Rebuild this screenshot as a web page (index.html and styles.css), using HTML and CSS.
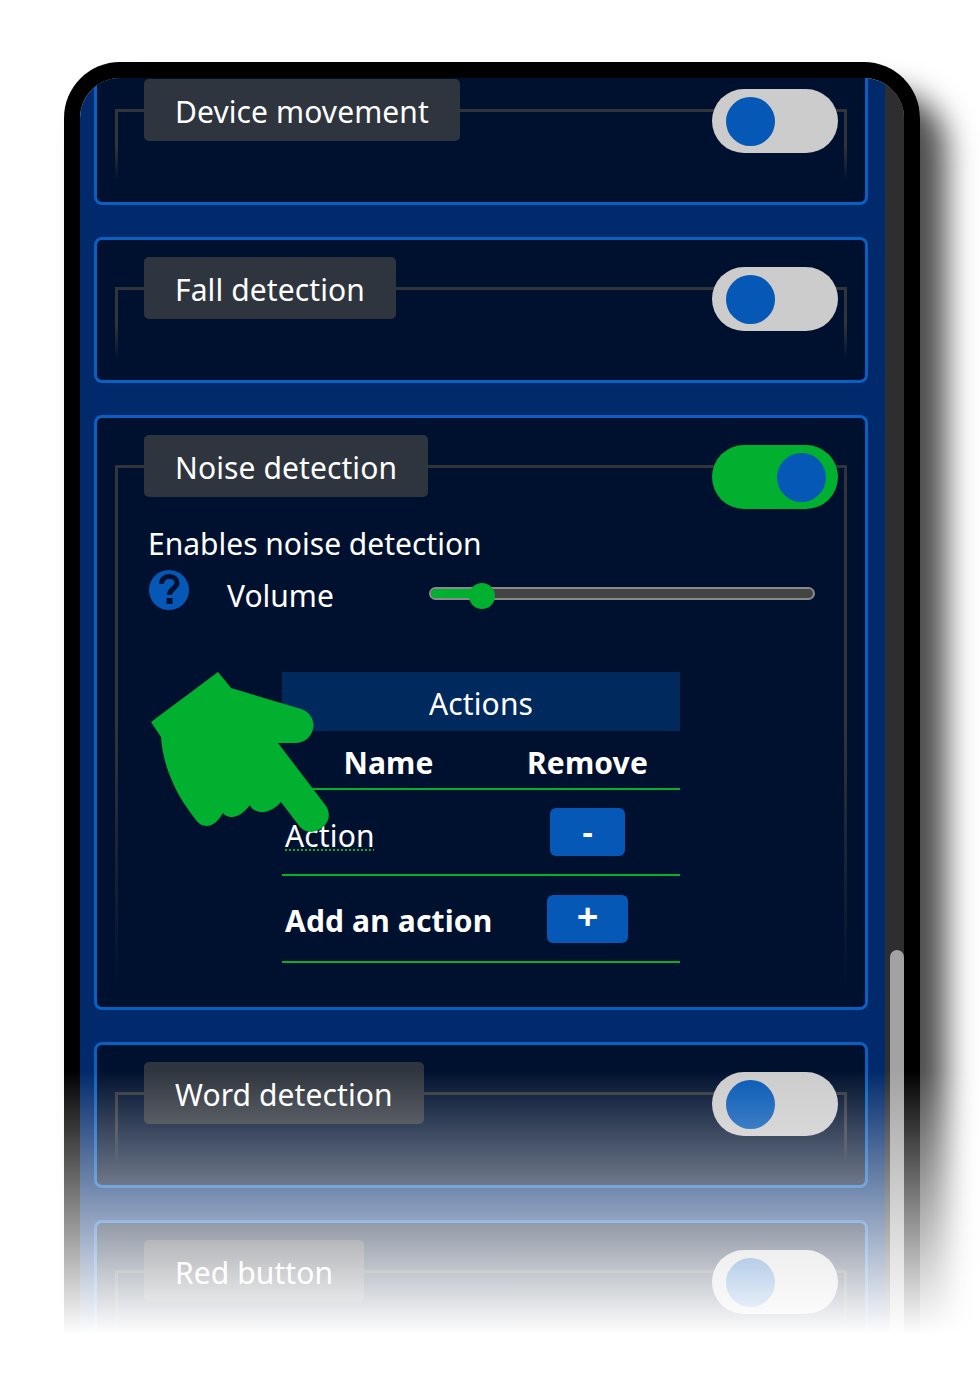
FILE: index.html
```html
<!DOCTYPE html>
<html lang="en">
  <head>
    <meta charset="UTF-8" />
    <title>Detection settings</title>
    <link rel="stylesheet" href="styles.css">
  </head>
  <body>
    <div class="phone">
      <div class="screen">
        <main class="list">
          <section class="card">
            <div class="card-head">
              <h2 class="tag">Device movement</h2>
              <span class="toggle"></span>
            </div>
          </section>

          <section class="card">
            <div class="card-head">
              <h2 class="tag">Fall detection</h2>
              <span class="toggle"></span>
            </div>
          </section>

          <section class="card">
            <div class="card-head">
              <h2 class="tag">Noise detection</h2>
              <span class="toggle on"></span>
            </div>
            <div class="card-body">
              <p class="intro">Enables noise detection</p>
              <div class="volume">
                <svg class="help" viewBox="0 0 40 40" aria-hidden="true">
                  <circle cx="20" cy="20" r="20" fill="#0558b5" />
                  <path d="M12.5 14C12.5 9 16 6.5 20.5 6.5C25 6.5 28 9.5 28 13C28 18.500 20.500 18.500 20.500 25" fill="none" stroke="#00112f" stroke-width="5" />
                  <rect x="17.500" y="28" width="6" height="6" fill="#00112f" />
                </svg>
                <span class="volume-label">Volume</span>
                <div class="slider">
                  <div class="slider-fill" style="width: 13.4%"></div>
                </div>
              </div>

              <table class="actions">
                <colgroup>
                  <col class="col-name" />
                  <col />
                </colgroup>
                <thead>
                  <tr>
                    <th class="actions-title" colspan="2">Actions</th>
                  </tr>
                  <tr class="actions-cols">
                    <th>Name</th>
                    <th>Remove</th>
                  </tr>
                </thead>
                <tbody>
                  <tr>
                    <td><span class="typo">Action</span></td>
                    <td><button class="btn" type="button">-</button></td>
                  </tr>
                  <tr class="add-row">
                    <td><strong>Add an action</strong></td>
                    <td><button class="btn wide" type="button">+</button></td>
                  </tr>
                </tbody>
              </table>
            </div>
          </section>

          <section class="card">
            <div class="card-head">
              <h2 class="tag">Word detection</h2>
              <span class="toggle"></span>
            </div>
          </section>

          <section class="card">
            <div class="card-head">
              <h2 class="tag">Red button</h2>
              <span class="toggle"></span>
            </div>
          </section>
        </main>

        <div class="scrollbar"><div class="scrollbar-thumb"></div></div>
      </div>
    </div>

    <!-- pointer lying over the table -->
    <svg class="hand" viewBox="150 670 180 165" aria-hidden="true">
      <path d="M218 672L231 688L301 709C311 712 315 722 313 729C311 738 303 743 296 743L278 743L326 806C331 814 329 822 323 827C316 833 307 834 300 827L281 802C276 808 268 813 260 812C254 811 251 808 250 805C245 812 238 817 232 817C228 817 224 815 223 813C219 820 213 826 207 826C202 826 198 823 196 820C186 807 178 795 173 783C166 768 162 752 161 737L151 722Z" fill="#00b02e" />
    </svg>

    <div class="fade"></div>
  </body>
</html>
```

FILE: styles.css
```css
/*
  Global styles
*/

:root {
  --blue: #0558b5;
  --green: #00b02e;
  --line: #31353a;
  --card-bg: #00112f;
}
* {
  margin: 0;
  padding: 0;
  box-sizing: border-box;
}
html,
body {
  height: 1400px;
  overflow: hidden;
}
body {
  position: relative;
  padding: 62px 60px 0 64px;
  color: white;
  background-color: white;
  font-family: "Noto Sans", sans-serif;
  font-size: 30px;
}

/*
  Phone shell
*/

.phone {
  height: 1400px;
  border: 16px solid black;
  border-bottom: none;
  border-radius: 56px 56px 0 0;
  box-shadow: 26px 30px 30px rgba(0, 0, 0, 0.7);
}
.screen {
  display: flex;
  height: 100%;
  overflow: hidden;
  border-radius: 40px 40px 0 0;
  background-color: #012a6c;
}
.list {
  display: flex;
  flex: 1;
  flex-direction: column;
  gap: 32px;
  margin-top: -19px;
  padding: 0 17px 0 14px;
}
.scrollbar {
  width: 19px;
  padding: 872px 0 0 5px;
  background-color: #2e2e2e;
}
.scrollbar-thumb {
  height: 600px;
  border-radius: 7px 7px 0 0;
  background-color: #a2a2a2;
}

/*
  Cards
*/

.card {
  position: relative;
  flex: none;
  min-height: 146px;
  border: 3px solid #0a60c2;
  border-radius: 8px;
  background-color: var(--card-bg);
}
.card::before {
  content: "";
  position: absolute;
  top: 47px;
  left: 18px;
  right: 18px;
  bottom: 22px;
  border: 3px solid;
  border-bottom: none;
  border-image: linear-gradient(var(--line) 50%, rgba(49, 53, 58, 0)) 1;
}
.card-head {
  position: relative;
  display: flex;
  align-items: flex-start;
  justify-content: space-between;
  padding: 17px 27px 0 47px;
}
.tag {
  height: 62px;
  padding: 3px 31px 0;
  border-radius: 5px;
  background-color: #2f353e;
  font-size: 30px;
  font-weight: 400;
  letter-spacing: 0.1px;
  line-height: 59px;
}
.toggle {
  display: flex;
  align-items: center;
  width: 126px;
  height: 64px;
  margin-top: 10px;
  padding: 0 12px 0 14px;
  border-radius: 32px;
  background-color: #cccccc;
}
.toggle::after {
  content: "";
  width: 49px;
  height: 49px;
  border-radius: 50%;
  background-color: var(--blue);
}
.toggle.on {
  justify-content: flex-end;
  background-color: var(--green);
}

/*
  Noise detection body
*/

.card-body {
  position: relative;
  padding: 13px 0 44px 51px;
}
.intro {
  line-height: 44px;
}
.volume {
  display: flex;
  align-items: flex-start;
  margin: 4px 0 0 1px;
}
.help {
  flex: none;
  width: 40px;
  height: 40px;
}
.volume-label {
  width: 202px;
  margin: 4px 0 0 38px;
  line-height: 44px;
}
.slider {
  width: 386px;
  height: 13px;
  margin-top: 17px;
  border: 2px solid #8a8a8a;
  border-radius: 7px;
  background-color: #444444;
}
.slider-fill {
  position: relative;
  height: 100%;
  border-radius: 5px;
  background-color: var(--green);
}
.slider-fill::after {
  content: "";
  position: absolute;
  top: -6.500px;
  right: -13px;
  width: 26px;
  height: 26px;
  border-radius: 50%;
  background-color: var(--green);
}

/*
  Actions table
*/

.actions {
  width: 398px;
  margin: 54px 0 0 134px;
  border-collapse: collapse;
  table-layout: fixed;
  letter-spacing: 0.15px;
}
.col-name {
  width: 213px;
}
.actions th,
.actions td {
  padding: 0;
  font-weight: 400;
}
.actions .actions-title {
  height: 59px;
  padding-top: 4px;
  background-color: #002a5e;
}
.actions .actions-cols th {
  height: 58px;
  padding-top: 5px;
  border-bottom: 2px solid var(--green);
  font-weight: 700;
}
.actions td {
  height: 86px;
  border-bottom: 2px solid var(--green);
  text-align: center;
}
.actions td:first-child {
  padding: 6px 0 0 3px;
  text-align: left;
  white-space: nowrap;
}
.actions .add-row td {
  height: 87px;
}
.actions .add-row td:first-child {
  padding-top: 4px;
}
.typo {
  text-decoration: underline dotted var(--green) 2px;
  text-underline-offset: 3px;
}
.btn {
  width: 75px;
  height: 48px;
  border: none;
  border-radius: 6px;
  color: white;
  background-color: var(--blue);
  font-family: inherit;
  font-size: 32px;
  font-weight: 700;
  line-height: 40px;
  vertical-align: middle;
}
.btn.wide {
  width: 81px;
  padding-bottom: 8px;
  font-size: 38px;
}

/*
  Overlays
*/

.hand {
  position: absolute;
  top: 670px;
  left: 150px;
  width: 180px;
  height: 165px;
}
.fade {
  position: absolute;
  top: 1070px;
  left: 0;
  right: 0;
  bottom: 0;
  background-image: linear-gradient(rgba(255, 255, 255, 0), white 265px);
}
```
